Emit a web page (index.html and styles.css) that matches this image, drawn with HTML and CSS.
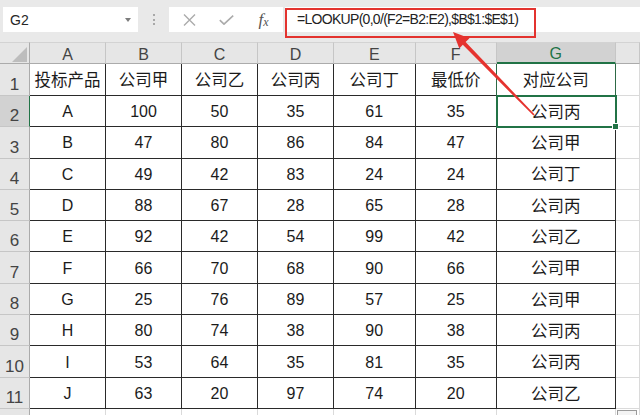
FILE: index.html
```html
<!DOCTYPE html>
<html lang="zh">
<head>
<meta charset="utf-8">
<title>LOOKUP</title>
<link rel="stylesheet" href="styles.css">
</head>
<body>
<div class="app">
  <div class="toolbar">
    <div class="namebox"><span>G2</span><span class="caret"></span></div>
    <div class="grip"><i></i><i></i><i></i></div>
    <div class="fxbox">
      <span class="slot"><svg width="13" height="12" viewBox="0 0 13 12"><path d="M1 0.5 L12 11.5 M12 0.5 L1 11.5" stroke="#ababab" stroke-width="1.4" fill="none"/></svg></span>
      <span class="slot"><svg width="15" height="10" viewBox="0 0 15 10"><path d="M0.8 5.2 L5 9.2 L14.2 0.6" stroke="#ababab" stroke-width="1.6" fill="none"/></svg></span>
      <span class="slot"><span class="fx">f<sub>x</sub></span></span>
    </div>
    <div class="formula">=LOOKUP(0,0/(F2=B2:E2),$B$1:$E$1)</div>
  </div>
  <div class="sheet">
    <div class="ch corner"><svg width="29" height="20" viewBox="0 0 29 20"><polygon points="12,19 27,4 27,19" fill="#bdbdbd"/></svg></div>
    <div class="ch">A</div><div class="ch">B</div><div class="ch">C</div><div class="ch">D</div><div class="ch">E</div><div class="ch">F</div><div class="ch sel">G</div><div class="ch"></div>

    <div class="rh">1</div><div class="c t">投标产品</div><div class="c t">公司甲</div><div class="c t">公司乙</div><div class="c t">公司丙</div><div class="c t">公司丁</div><div class="c t f1">最低价</div><div class="c t g1">对应公司</div><div class="h"></div>

    <div class="rh sel">2</div><div class="c">A</div><div class="c">100</div><div class="c">50</div><div class="c">35</div><div class="c">61</div><div class="c">35</div><div class="c t cur">公司丙<span class="handle"></span></div><div class="h"></div>

    <div class="rh">3</div><div class="c">B</div><div class="c">47</div><div class="c">80</div><div class="c">86</div><div class="c">84</div><div class="c">47</div><div class="c t">公司甲</div><div class="h"></div>

    <div class="rh">4</div><div class="c">C</div><div class="c">49</div><div class="c">42</div><div class="c">83</div><div class="c">24</div><div class="c">24</div><div class="c t">公司丁</div><div class="h"></div>

    <div class="rh">5</div><div class="c">D</div><div class="c">88</div><div class="c">67</div><div class="c">28</div><div class="c">65</div><div class="c">28</div><div class="c t">公司丙</div><div class="h"></div>

    <div class="rh">6</div><div class="c">E</div><div class="c">92</div><div class="c">42</div><div class="c">54</div><div class="c">99</div><div class="c">42</div><div class="c t">公司乙</div><div class="h"></div>

    <div class="rh">7</div><div class="c">F</div><div class="c">66</div><div class="c">70</div><div class="c">68</div><div class="c">90</div><div class="c">66</div><div class="c t">公司甲</div><div class="h"></div>

    <div class="rh">8</div><div class="c">G</div><div class="c">25</div><div class="c">76</div><div class="c">89</div><div class="c">57</div><div class="c">25</div><div class="c t">公司甲</div><div class="h"></div>

    <div class="rh">9</div><div class="c">H</div><div class="c">80</div><div class="c">74</div><div class="c">38</div><div class="c">90</div><div class="c">38</div><div class="c t">公司丙</div><div class="h"></div>

    <div class="rh">10</div><div class="c">I</div><div class="c">53</div><div class="c">64</div><div class="c">35</div><div class="c">81</div><div class="c">35</div><div class="c t">公司丙</div><div class="h"></div>

    <div class="rh">11</div><div class="c">J</div><div class="c">63</div><div class="c">20</div><div class="c">97</div><div class="c">74</div><div class="c">20</div><div class="c t">公司乙</div><div class="h"></div>

    <div class="rh"></div><div class="e"></div><div class="e"></div><div class="e"></div><div class="e"></div><div class="e"></div><div class="e"></div><div class="e"></div><div class="e"></div>
  </div>

  <div class="annot-box"></div>
  <svg class="arrow" width="640" height="415" viewBox="0 0 640 415">
    <polygon points="453,32 469.5,38.3 465.6,42.0 534.6,114.4 533.4,115.6 462.8,44.8 459.3,48.6" fill="#e5332f"/>
  </svg>
  <div class="qa"></div>
</div>
</body>
</html>
```

FILE: styles.css
```css
html, body {
  margin: 0;
  padding: 0;
  background: #ffffff;
}

.app {
  position: relative;
  width: 640px;
  height: 415px;
  overflow: hidden;
  background: #ffffff;
  font-family: "Liberation Sans", "Noto Sans CJK SC", sans-serif;
}

/* ---------- formula toolbar ---------- */
.toolbar {
  height: 42px;
  box-sizing: border-box;
  padding: 7px 0 0 3px;
  display: flex;
  align-items: flex-start;
  background: #e9e9e9;
}

.namebox {
  width: 135px;
  height: 25px;
  box-sizing: border-box;
  background: #ffffff;
  display: flex;
  align-items: center;
  justify-content: space-between;
  padding: 0 7px 0 7px;
  font-size: 14px;
  color: #262626;
}

.caret {
  width: 0;
  height: 0;
  border-left: 3.5px solid transparent;
  border-right: 3.5px solid transparent;
  border-top: 4px solid #7d7d7d;
}

.grip {
  width: 31px;
  height: 25px;
  display: flex;
  flex-direction: column;
  align-items: center;
  justify-content: center;
  gap: 2.5px;
}

.grip i {
  display: block;
  width: 2px;
  height: 2px;
  background: #a8a8a8;
}

.fxbox {
  width: 114px;
  height: 25px;
  box-sizing: border-box;
  background: #ffffff;
  display: flex;
  padding-left: 2px;
}

.slot {
  width: 37px;
  display: flex;
  align-items: center;
  justify-content: center;
}

.fx {
  font-family: "Liberation Serif", serif;
  font-style: italic;
  font-size: 17px;
  color: #555555;
  line-height: 1;
}

.fx sub {
  font-size: 12px;
  vertical-align: -1px;
}

.formula {
  flex: 1;
  margin-left: 2px;
  height: 25px;
  background: #ffffff;
  padding-left: 12px;
  font-size: 14px;
  line-height: 25px;
  letter-spacing: -0.7px;
  color: #222222;
  white-space: nowrap;
}

/* ---------- sheet grid ---------- */
.sheet {
  display: grid;
  grid-template-columns: 30px 76px 76px 76px 76px 81.5px 81.5px 118.5px 1fr;
  grid-template-rows: 22px 32px repeat(10, 31.3px) 20px;
}

.sheet > div {
  box-sizing: border-box;
}

.ch {
  background: #e6e6e6;
  border-top: 1px solid #d3d3d3;
  border-right: 1px solid #c6c6c6;
  border-bottom: 1px solid #ababab;
  display: flex;
  align-items: flex-end;
  justify-content: center;
  font-size: 16px;
  line-height: 1;
  color: #444444;
}

.ch.corner {
  align-items: flex-start;
  justify-content: flex-start;
  border-right-color: #ababab;
}

.ch.sel {
  background: #d2d2d2;
  color: #217346;
  border-bottom: 2px solid #217346;
}

.rh {
  background: #e6e6e6;
  border-right: 1px solid #ababab;
  border-bottom: 1px solid #c6c6c6;
  display: flex;
  align-items: flex-end;
  justify-content: center;
  padding-bottom: 2px;
  font-size: 17px;
  line-height: 1;
  color: #444444;
}

.rh.sel {
  background: #d2d2d2;
  border-right-color: #217346;
}

.c {
  border-right: 1px solid #2a2a2a;
  border-bottom: 1px solid #2a2a2a;
  display: flex;
  align-items: center;
  justify-content: center;
  padding-top: 2px;
  font-size: 16px;
  line-height: 1;
  color: #1b1b1b;
  white-space: nowrap;
}

.c.t {
  font-size: 16.5px;
}

.c.f1,
.c.g1 {
  border-right-color: #2e6a46;
}

.c.cur {
  position: relative;
  z-index: 1;
  outline: 2px solid #217346;
  outline-offset: -1px;
}

.handle {
  position: absolute;
  right: -4px;
  bottom: -4px;
  width: 5px;
  height: 5px;
  background: #217346;
  border: 1px solid #ffffff;
}

.h {
  border-right: 1px solid #dadada;
  border-bottom: 1px solid #dadada;
}

.e {
  border-right: 1px solid #dadada;
}

/* ---------- annotations ---------- */
.annot-box {
  position: absolute;
  left: 285px;
  top: 8px;
  width: 251px;
  height: 30px;
  box-sizing: border-box;
  border: 2.5px solid #e3332f;
}

.arrow {
  position: absolute;
  left: 0;
  top: 0;
  pointer-events: none;
  z-index: 3;
}

.qa {
  position: absolute;
  left: 617px;
  top: 410px;
  width: 20px;
  height: 10px;
  box-sizing: border-box;
  border: 1px solid #9a9a9a;
  background: #f4f4f4;
}
```
